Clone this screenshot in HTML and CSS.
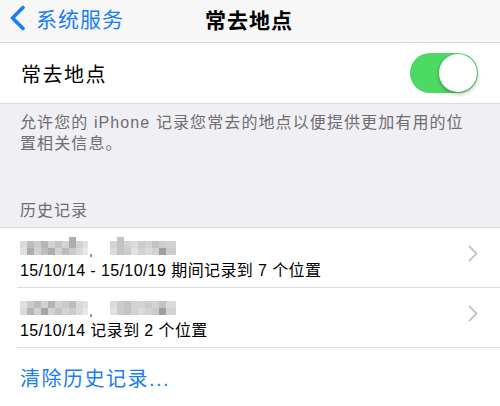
FILE: index.html
```html
<!DOCTYPE html>
<html lang="zh-CN">
<head>
<meta charset="utf-8">
<title>常去地点</title>
<link rel="stylesheet" href="styles.css">
</head>
<body>
<div class="screen">
  <header class="nav">
    <div class="back">
      <svg class="back-icon" width="17" height="26" viewBox="0 0 17 26"><path d="M14 2.5 L3.5 13 L14 23.5" fill="none" stroke="#1a7df2" stroke-width="3.6" stroke-linecap="round" stroke-linejoin="round"/></svg>
      <span class="back-text">系统服务</span>
    </div>
    <div class="nav-title">常去地点</div>
  </header>

  <section class="group">
    <div class="cell toggle-cell">
      <span class="cell-label">常去地点</span>
      <div class="switch"><div class="knob"></div></div>
    </div>
  </section>

  <p class="footer-note">允许您的 iPhone 记录您常去的地点以便提供更加有用的位置相关信息。</p>

  <div class="section-header">历史记录</div>

  <section class="group history">
    <div class="cell hist-cell">
      <div class="hist-text">
        <svg class="blur" width="160" height="22" viewBox="0 0 160 22">
          <g fill="#6a6a6a">
            <rect x="0" y="4" width="7" height="7" opacity=".25"/><rect x="7" y="4" width="7" height="7" opacity=".45"/><rect x="14" y="4" width="7" height="7" opacity=".35"/><rect x="21" y="4" width="7" height="7" opacity=".5"/><rect x="28" y="4" width="7" height="7" opacity=".3"/><rect x="35" y="4" width="7" height="7" opacity=".4"/><rect x="42" y="4" width="7" height="7" opacity=".3"/><rect x="49" y="0" width="7" height="11" opacity=".55"/><rect x="56" y="4" width="7" height="7" opacity=".3"/><rect x="63" y="4" width="5" height="7" opacity=".2"/>
            <rect x="0" y="11" width="7" height="7" opacity=".2"/><rect x="7" y="11" width="7" height="7" opacity=".55"/><rect x="14" y="11" width="7" height="7" opacity=".3"/><rect x="21" y="11" width="7" height="7" opacity=".45"/><rect x="28" y="11" width="7" height="7" opacity=".55"/><rect x="35" y="11" width="7" height="7" opacity=".3"/><rect x="42" y="11" width="7" height="7" opacity=".45"/><rect x="49" y="11" width="7" height="7" opacity=".35"/><rect x="56" y="11" width="7" height="7" opacity=".25"/><rect x="63" y="11" width="5" height="7" opacity=".15"/>
            <rect x="70" y="17" width="2" height="3" opacity=".7"/>
            <rect x="90" y="4" width="7" height="7" opacity=".3"/><rect x="97" y="0" width="7" height="11" opacity=".4"/><rect x="104" y="4" width="7" height="7" opacity=".3"/><rect x="111" y="4" width="7" height="7" opacity=".25"/><rect x="118" y="4" width="7" height="7" opacity=".35"/><rect x="125" y="4" width="7" height="7" opacity=".3"/><rect x="132" y="4" width="7" height="7" opacity=".4"/><rect x="139" y="4" width="7" height="7" opacity=".35"/><rect x="146" y="4" width="10" height="7" opacity=".3"/>
            <rect x="90" y="11" width="7" height="7" opacity=".25"/><rect x="97" y="11" width="7" height="7" opacity=".4"/><rect x="104" y="11" width="7" height="7" opacity=".35"/><rect x="111" y="11" width="7" height="7" opacity=".2"/><rect x="118" y="11" width="7" height="7" opacity=".3"/><rect x="125" y="11" width="7" height="7" opacity=".25"/><rect x="132" y="11" width="7" height="7" opacity=".3"/><rect x="139" y="11" width="7" height="7" opacity=".65"/><rect x="146" y="11" width="10" height="7" opacity=".35"/>
          </g>
        </svg>
        <div class="hist-line">15/10/14 - 15/10/19 期间记录到 7 个位置</div>
      </div>
      <svg class="chev" width="10" height="17" viewBox="0 0 10 17"><path d="M1.5 1.5 L8.5 8.5 L1.5 15.5" fill="none" stroke="#c4c4c9" stroke-width="1.8" stroke-linecap="round" stroke-linejoin="round"/></svg>
    </div>
    <div class="cell hist-cell">
      <div class="hist-text">
        <svg class="blur" width="160" height="22" viewBox="0 0 160 22">
          <g fill="#6a6a6a">
            <rect x="0" y="4" width="7" height="7" opacity=".2"/><rect x="7" y="4" width="7" height="7" opacity=".35"/><rect x="14" y="4" width="7" height="7" opacity=".45"/><rect x="21" y="4" width="7" height="7" opacity=".3"/><rect x="28" y="4" width="7" height="7" opacity=".5"/><rect x="35" y="4" width="7" height="7" opacity=".3"/><rect x="42" y="4" width="7" height="7" opacity=".35"/><rect x="49" y="4" width="7" height="7" opacity=".45"/><rect x="56" y="4" width="7" height="7" opacity=".25"/><rect x="63" y="4" width="5" height="7" opacity=".2"/>
            <rect x="0" y="11" width="7" height="7" opacity=".25"/><rect x="7" y="11" width="7" height="7" opacity=".5"/><rect x="14" y="11" width="7" height="7" opacity=".3"/><rect x="21" y="11" width="7" height="7" opacity=".6"/><rect x="28" y="11" width="7" height="7" opacity=".3"/><rect x="35" y="11" width="7" height="7" opacity=".4"/><rect x="42" y="11" width="7" height="7" opacity=".3"/><rect x="49" y="11" width="7" height="7" opacity=".35"/><rect x="56" y="11" width="7" height="7" opacity=".25"/><rect x="63" y="11" width="5" height="7" opacity=".15"/>
            <rect x="70" y="17" width="2" height="3" opacity=".7"/>
            <rect x="90" y="4" width="7" height="7" opacity=".25"/><rect x="97" y="4" width="7" height="7" opacity=".35"/><rect x="104" y="4" width="7" height="7" opacity=".4"/><rect x="111" y="4" width="7" height="7" opacity=".3"/><rect x="118" y="4" width="7" height="7" opacity=".3"/><rect x="125" y="4" width="7" height="7" opacity=".35"/><rect x="132" y="4" width="7" height="7" opacity=".3"/><rect x="139" y="4" width="7" height="7" opacity=".4"/><rect x="146" y="4" width="10" height="7" opacity=".25"/>
            <rect x="90" y="11" width="7" height="7" opacity=".2"/><rect x="97" y="11" width="7" height="7" opacity=".35"/><rect x="104" y="11" width="7" height="7" opacity=".4"/><rect x="111" y="11" width="7" height="7" opacity=".3"/><rect x="118" y="11" width="7" height="7" opacity=".25"/><rect x="125" y="11" width="7" height="7" opacity=".3"/><rect x="132" y="11" width="7" height="7" opacity=".35"/><rect x="139" y="11" width="7" height="7" opacity=".65"/><rect x="146" y="11" width="10" height="7" opacity=".3"/>
          </g>
        </svg>
        <div class="hist-line">15/10/14 记录到 2 个位置</div>
      </div>
      <svg class="chev" width="10" height="17" viewBox="0 0 10 17"><path d="M1.5 1.5 L8.5 8.5 L1.5 15.5" fill="none" stroke="#c4c4c9" stroke-width="1.8" stroke-linecap="round" stroke-linejoin="round"/></svg>
    </div>
    <div class="cell clear-cell">
      <span class="clear-text">清除历史记录...</span>
    </div>
  </section>
</div>
</body>
</html>
```

FILE: styles.css
```css
* { box-sizing: border-box; }
html, body { margin: 0; padding: 0; }
body {
  background: #efeff4;
  font-family: "Liberation Sans", "Noto Sans CJK SC", sans-serif;
  color: #000;
}
.screen {
  width: 500px;
  height: 406px;
  overflow: hidden;
  background: #efeff4;
}
.nav {
  height: 43px;
  background: #f7f7f8;
  border-bottom: 1px solid #d6d6da;
  display: flex;
  align-items: center;
  position: relative;
}
.back {
  display: flex;
  align-items: center;
  padding-left: 9px;
  gap: 10px;
  margin-top: -6px;
}
.back-text {
  font-size: 21px;
  color: #1a7df2;
  letter-spacing: 1px;
}
.nav-title {
  position: absolute;
  left: 205px;
  top: 4px;
  font-size: 21px;
  font-weight: 600;
  letter-spacing: 1px;
}
.group {
  background: #fff;
  border-bottom: 1px solid #d9d9de;
}
.cell {
  display: flex;
  align-items: center;
}
.toggle-cell {
  height: 60px;
  padding: 0 22px 0 21px;
  justify-content: space-between;
}
.cell-label {
  font-size: 20px;
  letter-spacing: 1.5px;
}
.switch {
  width: 68px;
  height: 40px;
  border-radius: 20px;
  background: #4cd964;
  position: relative;
}
.knob {
  position: absolute;
  right: 1px;
  top: 1px;
  width: 38px;
  height: 38px;
  border-radius: 50%;
  background: #fff;
  box-shadow: 0 2px 4px rgba(0,0,0,0.3);
}
.footer-note {
  margin: 0;
  padding: 8px 30px 0 20px;
  font-size: 16px;
  line-height: 21px;
  letter-spacing: 1.1px;
  color: #6d6d72;
  height: 93px;
}
.section-header {
  padding: 0 20px;
  font-size: 16px;
  letter-spacing: 1px;
  color: #6d6d72;
  height: 30px;
}
.history {
  border-top: 1px solid #d9d9de;
  padding-left: 17px;
}
.hist-cell {
  height: 60px;
  border-bottom: 1px solid #dcdce0;
  justify-content: space-between;
  padding: 0 22px 0 3px;
}
.hist-text {
  display: flex;
  flex-direction: column;
  padding-top: 2px;
}
.blur {
  display: block;
}
.hist-line {
  font-size: 16px;
  line-height: 20px;
  letter-spacing: 0.4px;
  margin-top: 2px;
}
.chev {
  display: block;
  margin-top: -8px;
}
.clear-cell {
  height: 60px;
  padding: 0 3px 2px;
}
.clear-text {
  font-size: 20px;
  color: #1a7df2;
  letter-spacing: 1.5px;
}
```
